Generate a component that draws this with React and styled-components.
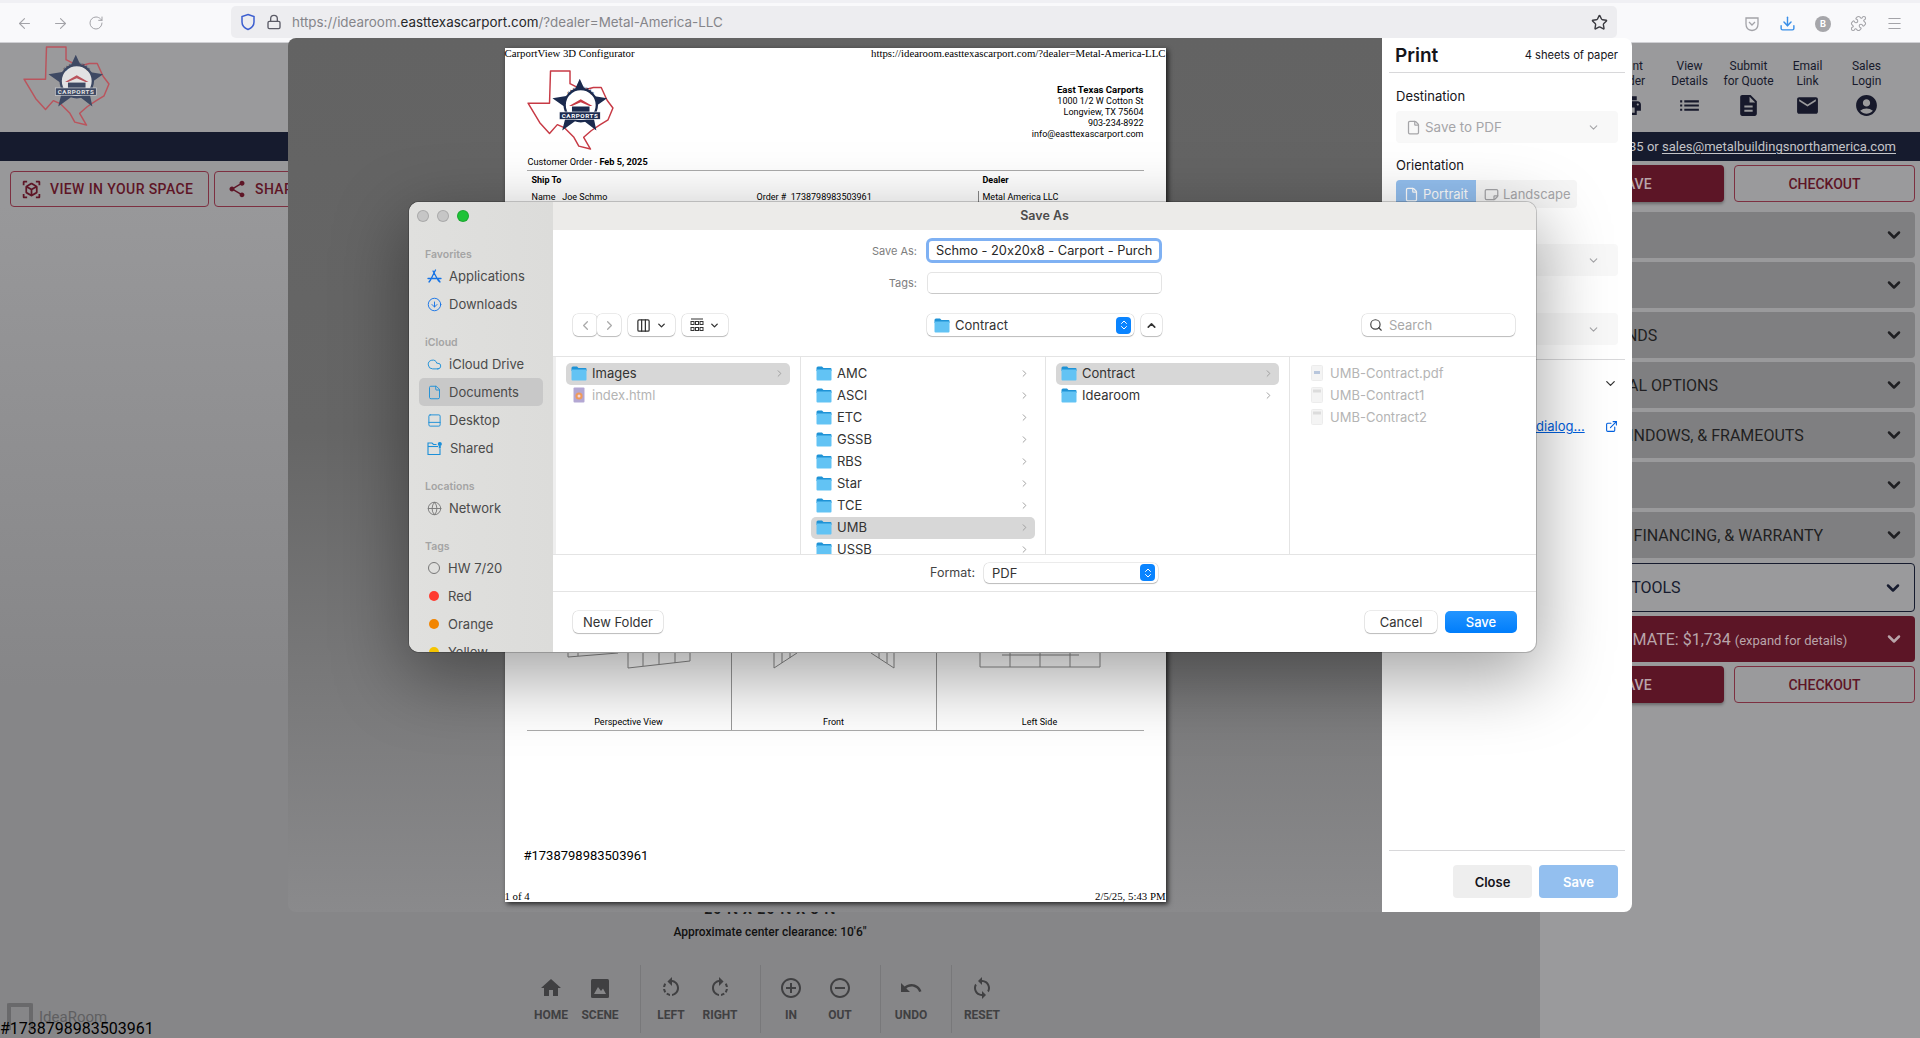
import React from "react";
import styled, { createGlobalStyle } from "styled-components";
import {
  ArrowLeft,
  ArrowRight,
  RotateCw,
  Lock,
  Star,
  Download,
  Puzzle,
  Menu,
  ChevronDown,
  ChevronUp,
  ChevronRight,
  ChevronLeft,
  ChevronsUpDown,
  File,
  ExternalLink,
  CircleArrowDown,
  Cloud,
  PanelBottom,
  Globe,
  Columns3,
  Search,
} from "lucide-react";
import {
  MdHome,
  MdRotateLeft,
  MdRotateRight,
  MdAddCircleOutline,
  MdRemoveCircleOutline,
  MdUndo,
  MdSync,
  MdList,
  MdDescription,
  MdMail,
  MdAccountCircle,
  MdPrint,
  MdShare,
  MdViewInAr,
} from "react-icons/md";

const GlobalStyle = createGlobalStyle`
  html, body { margin: 0; padding: 0; height: 100%; overflow: hidden; }
  body { font-family: Roboto, "Liberation Sans", sans-serif; background: #9a9a9c; }
  * { box-sizing: border-box; }
`;

const Screen = styled.div`
  position: relative;
  width: 1920px;
  height: 1038px;
  display: flex;
  flex-direction: column;
  overflow: hidden;
`;

/* browser chrome */
const BrowserBar = styled.div`
  height: 43px;
  flex: none;
  display: flex;
  align-items: center;
  padding: 2px 0 0 16px;
  background: #f9f9fb;
  border-top: 3px solid #f0f0f4;
  border-bottom: 1px solid #d0d0d4;
  color: #a3a3a8;
`;

const NavIcons = styled.div`
  display: flex;
  gap: 19px;
  width: 215px;
  flex: none;
`;

const UrlBar = styled.div`
  width: 1386px;
  height: 32px;
  margin-top: -3px;
  flex: none;
  display: flex;
  align-items: center;
  padding: 0 9px 0 9px;
  border-radius: 5px;
  background: #ededf0;
  font: 13.4px Inter, sans-serif;
  color: #85858a;
`;

const UrlText = styled.span`
  margin-left: 10px;
  flex: 1;
  b { font-weight: 400; color: #27272a; }
`;

const ToolIcons = styled.div`
  display: flex;
  align-items: center;
  gap: 19px;
  margin-left: 127px;
`;

const Avatar = styled.div`
  width: 16px;
  height: 16px;
  border-radius: 50%;
  background: #a6a6aa;
  color: #fff;
  font: 700 9px/16px Inter, sans-serif;
  text-align: center;
`;

/* configurator behind the dialogs */
const AppHeader = styled.header`
  height: 89px;
  flex: none;
  display: flex;
  justify-content: space-between;
  background: #9a9a9c;
  padding: 3px 24px 0 23px;
`;

const HeaderNav = styled.nav`
  display: flex;
`;

const NavItem = styled.div`
  width: 59px;
  padding-top: 13px;
  display: flex;
  flex-direction: column;
  align-items: center;
  font-size: 12px;
  line-height: 15px;
  text-align: center;
  color: #17192b;
  svg { margin-top: 4px; }
`;

const InfoBar = styled.div`
  height: 29px;
  flex: none;
  display: flex;
  align-items: center;
  justify-content: flex-end;
  padding-right: 24px;
  background: #161b2e;
  color: #c4c4c8;
  font-size: 13px;
  u { text-underline-offset: 2px; }
`;

const Main = styled.div`
  flex: 1;
  display: flex;
  min-height: 0;
`;

const Canvas = styled.main`
  position: relative;
  flex: 1;
  display: flex;
  flex-direction: column;
  background: linear-gradient(#98989a 5%, #868688 60%);
`;

const CanvasActions = styled.div`
  height: 46px;
  display: flex;
  gap: 5px;
  padding: 10px 0 0 10px;
`;

const OutlineAction = styled.div`
  height: 36px;
  width: ${(p) => p.$width}px;
  display: flex;
  align-items: center;
  gap: 8px;
  padding-left: ${(p) => p.$inset}px;
  border: 1px solid #7d3041;
  border-radius: 4px;
  color: #5e1526;
  font-size: 14px;
  font-weight: 500;
  letter-spacing: 0.4px;
`;

const Dimensions = styled.div`
  margin-top: auto;
  text-align: center;
  font-size: 14px;
  font-weight: 700;
  letter-spacing: 1px;
  color: #1a1a1a;
  line-height: 16px;
`;

const Clearance = styled.div`
  margin-top: 7px;
  text-align: center;
  font-size: 12px;
  font-weight: 500;
  line-height: 16px;
  color: #111;
`;

const ViewToolbar = styled.div`
  display: flex;
  justify-content: center;
  padding: 25px 0 5px;
  margin-left: 2px;
`;

const ToolGroup = styled.div`
  display: flex;
  padding: 0 15px 0 6px;
  height: 68px;
  border-right: ${(p) => (p.$last ? "none" : "1px solid #78787a")};
`;

const ToolItem = styled.div`
  width: 49px;
  display: flex;
  flex-direction: column;
  align-items: center;
  padding-top: 11px;
  color: #404042;
  font-size: 12px;
  font-weight: 700;
  gap: 7px;
  line-height: 16px;
`;

const ToolGlyph = styled.span`
  height: 24px;
  display: flex;
  align-items: center;
`;

const Watermark = styled.div`
  position: absolute;
  left: 7px;
  bottom: 8px;
  display: flex;
  align-items: center;
  gap: 6px;
  color: #5f5f61;
  font-size: 15px;
  i {
    width: 26px;
    height: 27px;
    border: 4px solid #69696b;
    border-bottom: none;
    border-radius: 2px;
  }
`;

const OrderStamp = styled.div`
  position: absolute;
  left: 0;
  bottom: 0;
  font-size: 16px;
  line-height: 19px;
  color: #000;
`;

const SidePanel = styled.aside`
  width: 380px;
  flex: none;
  background: #9a9a9c;
  padding: 4px 5px 0;
  display: flex;
  flex-direction: column;
  gap: 4px;
`;

const ActionRow = styled.div`
  display: flex;
  gap: 10px;
  height: 37px;
  flex: none;
  margin-bottom: ${(p) => p.$below || 0}px;
`;

const SolidAction = styled.div`
  flex: 1;
  display: flex;
  align-items: center;
  justify-content: center;
  border-radius: 4px;
  background: #5c1526;
  color: #b9a5aa;
  font-size: 14px;
  font-weight: 500;
  box-shadow: 0 2px 3px rgba(0, 0, 0, 0.3);
`;

const GhostAction = styled(SolidAction)`
  background: transparent;
  box-shadow: none;
  border: 1px solid #7d3041;
  color: #5e1526;
`;

const Accordion = styled.div`
  height: ${(p) => (p.$variant === "outlined" ? 49 : 46)}px;
  flex: none;
  display: flex;
  align-items: center;
  justify-content: space-between;
  padding: 0 11px 0 11px;
  border-radius: 4px;
  font-size: 16px;
  ${(p) =>
    p.$variant === "outlined"
      ? "border: 1px solid #161b2e; color: #161b2e; margin-top: 1px;"
      : p.$variant === "price"
      ? "background: #5c1526; color: #b9a5aa;"
      : "background: #7f7f81; color: #1f1f22;"}
  small { font-size: 13px; }
`;

/* firefox print preview */
const PrintDialog = styled.section`
  position: absolute;
  left: 288px;
  top: 38px;
  width: 1344px;
  height: 874px;
  display: flex;
  border-radius: 8px;
  overflow: hidden;
`;

const PreviewArea = styled.div`
  flex: 1;
  display: flex;
  justify-content: center;
  padding-top: 10px;
  background: linear-gradient(#636363, #666666 45%, #8a8a8c);
`;

const Sheet = styled.div`
  width: 661px;
  height: 854px;
  display: flex;
  flex-direction: column;
  background: #fff;
  color: #000;
  box-shadow: 2px 2px 5px rgba(0, 0, 0, 0.75);
`;

const SheetLine = styled.div`
  display: flex;
  justify-content: space-between;
  font: 10.8px/11px "Liberation Serif", serif;
  white-space: nowrap;
`;

const SheetBody = styled.div`
  flex: 1;
  display: flex;
  flex-direction: column;
  padding: 0 22px;
  font-size: 9px;
`;

const BrandRow = styled.div`
  display: flex;
  justify-content: space-between;
  margin-top: 11px;
  height: 82px;
`;

const CompanyBlock = styled.div`
  margin-top: 13px;
  text-align: right;
  line-height: 11px;
  b { font-size: 9.6px; line-height: 13px; }
`;

const OrderDate = styled.div`
  margin-top: 4px;
  padding: 0 0 2px 1px;
  font-size: 9.2px;
  line-height: 12px;
  border-bottom: 1px solid #aaa;
`;

const PartyHeads = styled.div`
  display: flex;
  padding: 3px 0 0 5px;
  font-weight: 700;
  line-height: 12px;
  span:first-child { width: 451px; }
`;

const PartyRow = styled.div`
  display: flex;
  padding: 5px 0 0 5px;
  line-height: 12px;
`;

const PartyCell = styled.span`
  width: ${(p) => p.$width}px;
  flex: none;
  ${(p) => p.$divided && "border-left: 1px solid #888; margin-left: -5px; padding-left: 4px;"}
`;

const ViewsRow = styled.div`
  margin-top: auto;
  display: grid;
  grid-template-columns: 205px 205px 206px;
  height: 78px;
  border-bottom: 1px solid #aaa;
`;

const ViewCell = styled.div`
  display: flex;
  flex-direction: column;
  justify-content: space-between;
  align-items: center;
  border-right: ${(p) => (p.$last ? "none" : "1px solid #999")};
  line-height: 12px;
  padding-bottom: 2px;
`;

const Barcode = styled.div`
  margin: 117px 0 27px -3px;
  font-size: 13px;
  line-height: 16px;
`;

/* print settings */
const PrintPanel = styled.div`
  width: 250px;
  flex: none;
  display: flex;
  flex-direction: column;
  background: #fff;
  color: #15141a;
  font-family: Inter, sans-serif;
`;

const PanelHead = styled.div`
  height: 35px;
  flex: none;
  margin: 0 7px;
  padding: 0 7px 0 6px;
  display: flex;
  align-items: center;
  justify-content: space-between;
  border-bottom: 1px solid #d8d8da;
  font-size: 11.2px;
  b { font-size: 19px; font-weight: 600; }
`;

const PanelBody = styled.div`
  flex: 1;
  padding: 15px 14px 0;
`;

const FieldLabel = styled.div`
  font-size: 13px;
  line-height: 16px;
  height: 16px;
`;

const FakeSelect = styled.div`
  height: 32px;
  margin: ${(p) => p.$margin || "7px 0 14px"};
  padding: 0 18px 0 10px;
  display: flex;
  align-items: center;
  gap: 4px;
  border-radius: 4px;
  background: #f8f8f8;
  color: #a5a5a8;
  font-size: 13.4px;
  svg:last-child { margin-left: auto; }
`;

const ToggleGroup = styled.div`
  width: 181px;
  height: 28px;
  margin-top: 7px;
  display: flex;
  border-radius: 4px;
  overflow: hidden;
  background: #f6f6f6;
  color: #a5a5a8;
  font-size: 13px;
`;

const ToggleButton = styled.div`
  flex: ${(p) => (p.$active ? "0 0 80px" : 1)};
  display: flex;
  align-items: center;
  gap: 4px;
  padding-left: 8px;
  background: ${(p) => (p.$active ? "#93bfef" : "transparent")};
  color: ${(p) => (p.$active ? "#fff" : "inherit")};
`;

const MoreRow = styled.div`
  margin: 14px -7px 0;
  padding: 16px 7px 0;
  height: 59px;
  border-top: 1px solid #d8d8da;
  display: flex;
  justify-content: flex-end;
`;

const SystemLink = styled.div`
  display: flex;
  justify-content: space-between;
  align-items: center;
  color: #0060df;
  font-size: 13px;
  span { text-decoration: underline; }
`;

const PanelFoot = styled.div`
  margin: 0 7px;
  padding: 14px 7px 14px 0;
  display: flex;
  justify-content: flex-end;
  gap: 7px;
  border-top: 1px solid #d8d8da;
`;

const PanelButton = styled.div`
  width: 79px;
  height: 33px;
  display: flex;
  align-items: center;
  justify-content: center;
  border-radius: 4px;
  font-size: 13px;
  font-weight: 600;
  background: ${(p) => (p.$primary ? "#93bfef" : "#eeeeee")};
  color: ${(p) => (p.$primary ? "#fff" : "#15141a")};
`;

/* macOS save sheet */
const SaveSheet = styled.section`
  position: absolute;
  left: 409px;
  top: 202px;
  width: 1127px;
  height: 450px;
  display: flex;
  border-radius: 10px;
  overflow: hidden;
  background: #fff;
  font-family: Inter, sans-serif;
  font-feature-settings: "calt" 0;
  box-shadow: 0 0 0 1px rgba(0, 0, 0, 0.18), 0 22px 70px 4px rgba(0, 0, 0, 0.36);
`;

const Sidebar = styled.nav`
  width: 144px;
  flex: none;
  padding: 45px 10px 0;
  background: linear-gradient(90deg, #e0e0de, #dcdcda);
  overflow: hidden;
`;

const SideLabel = styled.div`
  height: 14px;
  margin: ${(p) => (p.$first ? "1px" : "18px")} 0 0 6px;
  font-size: 10.5px;
  font-weight: 600;
  line-height: 14px;
  color: #a4a4a4;
`;

const SideRow = styled.div`
  height: 28px;
  display: flex;
  align-items: center;
  gap: 7px;
  padding-left: 8px;
  border-radius: 5px;
  background: ${(p) => (p.$active ? "#c8c8c8" : "transparent")};
  color: #4a4a4a;
  font-size: 13px;
  svg { color: ${(p) => p.$tint || "#1c8fd8"}; flex: none; }
`;

const TagDot = styled.span`
  width: 14px;
  height: 14px;
  flex: none;
  display: flex;
  align-items: center;
  justify-content: center;
  &::before {
    content: "";
    width: 10px;
    height: 10px;
    border-radius: 50%;
    ${(p) => (p.$color ? `background: ${p.$color};` : "border: 1px solid #777;")}
  }
`;

const Traffic = styled.div`
  position: absolute;
  left: 8px;
  top: 8px;
  display: flex;
  gap: 8px;
`;

const Light = styled.i`
  width: 12px;
  height: 12px;
  border-radius: 50%;
  background: ${(p) => p.$color};
  border: 1px solid rgba(0, 0, 0, 0.14);
`;

const SavePane = styled.div`
  flex: 1;
  display: flex;
  flex-direction: column;
  min-width: 0;
`;

const TitleBar = styled.div`
  height: 28px;
  flex: none;
  display: flex;
  align-items: center;
  justify-content: center;
  padding-bottom: 1px;
  background: #ecebe9;
  font-size: 12.5px;
  font-weight: 600;
  color: #4c4c4c;
`;

const FormRow = styled.div`
  display: flex;
  align-items: center;
  margin-top: ${(p) => p.$top}px;
`;

const FormLabel = styled.label`
  width: 364px;
  margin-right: 9px;
  text-align: right;
  font-size: 11px;
  color: #7d7d7d;
`;

const NameInput = styled.div`
  width: 236px;
  height: 25px;
  padding-left: 7px;
  display: flex;
  align-items: center;
  overflow: hidden;
  white-space: nowrap;
  border: 3px solid #7fb1f3;
  border-radius: 6px;
  font-size: 12.8px;
  color: #262626;
`;

const TagsInput = styled.div`
  width: 235px;
  height: 22px;
  margin-left: 1px;
  border: 1px solid #e4e4e4;
  border-bottom-color: #c9c9c9;
  border-radius: 5px;
`;

const BrowserTools = styled.div`
  height: 22px;
  flex: none;
  margin-top: 20px;
  padding: 0 21px 0 20px;
  display: flex;
  gap: 7px;
`;

const MacButton = styled.div`
  width: ${(p) => p.$width}px;
  height: ${(p) => p.$height || 22}px;
  flex: none;
  display: flex;
  align-items: center;
  justify-content: ${(p) => p.$justify || "center"};
  gap: 5px;
  margin-left: ${(p) => p.$left || 0}px;
  border-radius: 5px;
  background: #fff;
  box-shadow: 0 0 0 0.5px rgba(0, 0, 0, 0.16), 0 1px 1px rgba(0, 0, 0, 0.2);
  color: #333;
  font-size: 13px;
`;

const Stepper = styled.span`
  width: 15px;
  height: 17px;
  flex: none;
  display: flex;
  align-items: center;
  justify-content: center;
  border-radius: 4px;
  background: #0a84ff;
  color: #fff;
  margin-left: auto;
  margin-right: 3px;
`;

const SearchBox = styled(MacButton)`
  margin-left: auto;
  justify-content: flex-start;
  gap: 6px;
  padding-left: 7px;
  color: #a8a8a8;
  font-size: 13px;
  svg { color: #444; }
`;

const Columns = styled.div`
  flex: 1;
  min-height: 0;
  margin-top: 20px;
  display: flex;
  border-top: 1px solid #e4e4e4;
  border-bottom: 1px solid #e4e4e4;
`;

const Column = styled.div`
  width: ${(p) => p.$width}px;
  flex: ${(p) => (p.$width ? "none" : 1)};
  padding: 6px 10px 0 ${(p) => p.$inset || 10}px;
  overflow: hidden;
  border-right: ${(p) => (p.$last ? "none" : "1px solid #e4e4e4")};
  border-left: ${(p) => (p.$first ? "3px solid #efefef" : "none")};
`;

const FileRow = styled.div`
  height: 22px;
  flex: none;
  display: flex;
  align-items: center;
  gap: 5px;
  padding: 0 5px 2px;
  border-radius: 5px;
  background: ${(p) => (p.$selected ? "#d7d7d7" : "transparent")};
  color: ${(p) => (p.$dim ? "#b4b4b4" : "#333")};
  font-size: 13px;
  svg:not(:first-child) { margin-left: auto; color: #9a9a9a; }
`;

const FormatRow = styled.div`
  height: 36px;
  flex: none;
  display: flex;
  align-items: center;
  gap: 9px;
  padding: 0 0 1px 216px;
`;

const FormatLabel = styled.span`
  width: 206px;
  text-align: right;
  font-size: 12.5px;
  color: #444;
`;

const SaveFoot = styled.div`
  height: 61px;
  flex: none;
  display: flex;
  align-items: center;
  padding: 0 20px 1px;
  border-top: 1px solid #e4e4e4;
`;

const SaveButton = styled(MacButton)`
  background: linear-gradient(#2395ff, #007dfb);
  color: #fff;
  font-weight: 500;
  box-shadow: none;
`;

function Logo({ dim, id }) {
  return (
    <svg width="87" height="80" viewBox="0 0 89 82" opacity={dim ? 0.72 : 1}>
      <defs>
        <path id={id} d="M41 34 A14 14 0 0 1 69 34" />
      </defs>
      <path
        d="M24 1 L44 1 L44 14 L52 18 L60 20 L68 18 L76 18 L82 31 L88 39 L83 51 L75 56 L66 62 L58 69 L62 76 L65 81 L53 78 L48 69 L38 59 L31 56 L23 65 L13 54 L1 34 L23 34 Z"
        fill={dim ? "none" : "#fff"}
        stroke="#c73a45"
        strokeWidth="1.5"
        strokeLinejoin="round"
      />
      <path
        d="M54 9 L61.6 25.5 L82 29 L66.4 40 L71 62 L54 49 L36 62 L41.6 40 L26 29 L46.4 25.5 Z"
        fill="#1b2a4e"
      />
      <circle cx="55" cy="36" r="16.5" fill="#fff" stroke="#1b2a4e" strokeWidth="2.4" />
      <text fontSize="4.6" fontWeight="700" fill="#1b2a4e" fontFamily="Roboto, sans-serif">
        <textPath href={`#${id}`} startOffset="50%" textAnchor="middle">
          EAST TEXAS
        </textPath>
      </text>
      <path d="M43 37 L55 30 L67 37 L64 37 L55 33 L46 37 Z" fill="#c73a45" />
      <path d="M46 37.5 H64 V43 H46 Z" fill="#1b2a4e" />
      <rect x="33" y="43" width="42" height="7.5" fill="#1b2a4e" stroke="#fff" strokeWidth="0.6" />
      <text
        x="54"
        y="49"
        fontSize="6.4"
        fontWeight="700"
        fill="#fff"
        textAnchor="middle"
        textLength="37"
        fontFamily="Roboto, sans-serif"
      >
        CARPORTS
      </text>
    </svg>
  );
}

function FolderIcon({ size = 16 }) {
  return (
    <svg width={size} height={size - 1} viewBox="0 0 16 15">
      <path d="M0.5 2 Q0.5 0.5 2 0.5 H6 L7.5 2 H14.5 Q15.5 2 15.5 3 V5 H0.5 Z" fill="#1f93d6" />
      <rect x="0.5" y="3.5" width="15" height="11" rx="1" fill="#62c3f4" />
    </svg>
  );
}

function AppsIcon() {
  return (
    <svg width="15" height="15" viewBox="0 0 15 15" fill="none" stroke="#1573e6" strokeWidth="1.3" strokeLinecap="round">
      <path d="M8.5 1 L3.5 11 M6 2 L11.5 12 M1 9.5 H14 M2 13 L3.5 11 M13 13 L11.5 11" />
    </svg>
  );
}

function SharedIcon() {
  return (
    <svg width="16" height="15" viewBox="0 0 16 15" fill="none" stroke="currentColor" strokeWidth="1.1">
      <path d="M9.5 3.5 H6.5 L5 2 H1 V13.5 H13 V8" />
      <path d="M1 5.5 H11" />
      <circle cx="12.8" cy="3" r="1.5" fill="currentColor" />
      <path d="M12.8 5 V7.5" strokeWidth="2" />
    </svg>
  );
}

function GroupIcon() {
  return (
    <svg width="14" height="14" viewBox="0 0 14 14" fill="none" stroke="#333" strokeWidth="1">
      <path d="M1 1 H13" />
      <rect x="1" y="3.5" width="3" height="3" />
      <rect x="5.5" y="3.5" width="3" height="3" />
      <rect x="10" y="3.5" width="3" height="3" />
      <rect x="1" y="9.5" width="3" height="3" />
      <rect x="5.5" y="9.5" width="3" height="3" />
      <rect x="10" y="9.5" width="3" height="3" />
    </svg>
  );
}

function HtmlFileIcon() {
  return (
    <svg width="16" height="16" viewBox="0 0 16 16">
      <rect x="2.5" y="0.5" width="11" height="15" rx="1" fill="#b3a7d3" />
      <circle cx="8" cy="9" r="3.6" fill="#ef9a5a" />
      <circle cx="8" cy="9" r="1.5" fill="#f3d6e0" />
    </svg>
  );
}

function ThumbIcon({ kind }) {
  return (
    <svg width="16" height="16" viewBox="0 0 16 16">
      <rect x="2.5" y="0.5" width="11" height="15" rx="1" fill="#f4f4f4" stroke="#ececec" />
      {kind === "pdf" ? <rect x="5" y="6" width="6" height="3" fill="#b8c6dc" /> : <rect x="4" y="2.5" width="8" height="3" fill="#dcdcdc" />}
    </svg>
  );
}

function ScenePortrait() {
  return (
    <svg width="18" height="19" viewBox="0 0 18 19">
      <rect width="18" height="19" rx="1.5" fill="#404042" />
      <path d="M3 15 L7 8 L10 12 L12 9.5 L15 15 Z" fill="#868688" />
    </svg>
  );
}

const sidebarSections = [
  {
    title: "Favorites",
    items: [
      { label: "Applications", icon: <AppsIcon /> },
      { label: "Downloads", icon: <CircleArrowDown size={15} strokeWidth={1.5} color="#1573e6" /> },
    ],
  },
  {
    title: "iCloud",
    items: [
      { label: "iCloud Drive", icon: <Cloud size={15} strokeWidth={1.5} /> },
      { label: "Documents", icon: <File size={15} strokeWidth={1.5} />, active: true },
      { label: "Desktop", icon: <PanelBottom size={15} strokeWidth={1.5} /> },
      { label: "Shared", icon: <SharedIcon /> },
    ],
  },
  {
    title: "Locations",
    items: [{ label: "Network", icon: <Globe size={15} strokeWidth={1.5} />, tint: "#7a7a7a" }],
  },
];

const tags = [
  { label: "HW 7/20" },
  { label: "Red", color: "#ff3b30" },
  { label: "Orange", color: "#f28500" },
  { label: "Yellow", color: "#f5c400" },
];

const dealerFolders = ["AMC", "ASCI", "ETC", "GSSB", "RBS", "Star", "TCE", "UMB", "USSB"];
const contractFiles = [
  ["UMB-Contract.pdf", "pdf"],
  ["UMB-Contract1", "doc"],
  ["UMB-Contract2", "doc"],
];
const navItems = [
  ["Print", "Order", MdPrint],
  ["View", "Details", MdList],
  ["Submit", "for Quote", MdDescription],
  ["Email", "Link", MdMail],
  ["Sales", "Login", MdAccountCircle],
];
const sections = [
  "STYLE",
  "SIZE",
  "SIDES & ENDS",
  "ADDITIONAL OPTIONS",
  "DOORS, WINDOWS, & FRAMEOUTS",
  "COLORS",
  "PAYMENT, FINANCING, & WARRANTY",
];

const toolGroups = [
  [["HOME", <MdHome size={24} key="h" />], ["SCENE", <ScenePortrait key="s" />]],
  [["LEFT", <MdRotateLeft size={24} key="l" />], ["RIGHT", <MdRotateRight size={24} key="r" />]],
  [["IN", <MdAddCircleOutline size={24} key="i" />], ["OUT", <MdRemoveCircleOutline size={24} key="o" />]],
  [["UNDO", <MdUndo size={24} key="u" />]],
  [["RESET", <MdSync size={24} key="c" />]],
];

function Wireframes({ kind }) {
  const line = { fill: "none", stroke: "#8a8a8a", strokeWidth: 1 };
  if (kind === "perspective") {
    return (
      <svg width="205" height="16" viewBox="0 0 205 16">
        <path d="M42 0 V4 L92 0 M52 0 V3 M102 0 V15 L164 8 V0 M117 0 V13 M133 0 V11 M149 0 V10" {...line} />
      </svg>
    );
  }
  if (kind === "front") {
    return (
      <svg width="205" height="16" viewBox="0 0 205 16">
        <path d="M43 0 V15 L66 0 M51 0 V10 M59 0 V5 M140 0 L163 15 V0 M148 0 V5 M156 0 V10" {...line} />
      </svg>
    );
  }
  return (
    <svg width="205" height="16" viewBox="0 0 205 16">
      <path d="M43 0 V14 H163 V0 M73 0 V14 M103 0 V14 M133 0 V14 M65 2 H142" {...line} />
    </svg>
  );
}

const Chevron = () => <ChevronDown size={20} strokeWidth={3} />;

export default function App() {
  return (
    <Screen>
      <GlobalStyle />
      <BrowserBar>
        <NavIcons>
          <ArrowLeft size={17} strokeWidth={1.5} />
          <ArrowRight size={17} strokeWidth={1.5} />
          <RotateCw size={16} strokeWidth={1.5} />
        </NavIcons>
        <UrlBar>
          <svg width="16" height="18" viewBox="0 0 16 18" fill="none" stroke="#3d5fd0" strokeWidth="1.5">
            <path d="M8 1.5 L14 3.5 V9 Q14 14 8 16.5 Q2 14 2 9 V3.5 Z" />
          </svg>
          <Lock size={16} style={{ marginLeft: 10, color: "#5b5b66" }} />
          <UrlText>
            https://idearoom.<b>easttexascarport.com</b>/?dealer=Metal-America-LLC
          </UrlText>
          <Star size={17} color="#3a3a40" />
        </UrlBar>
        <ToolIcons>
          <svg width="16" height="16" viewBox="0 0 16 16" fill="none" stroke="#a3a3a8" strokeWidth="1.3">
            <path d="M2 2 H14 V8 Q14 14 8 14.5 Q2 14 2 8 Z M5 6 L8 9 L11 6" />
          </svg>
          <Download size={17} color="#3a8fe8" />
          <Avatar>B</Avatar>
          <Puzzle size={17} strokeWidth={1.5} />
          <Menu size={17} strokeWidth={1.5} />
        </ToolIcons>
      </BrowserBar>

      <AppHeader>
        <Logo dim id="logo-arc-app" />
        <HeaderNav>
          {navItems.map(([first, second, Icon]) => (
            <NavItem key={first}>
              {first}
              <br />
              {second}
              <Icon size={25} />
            </NavItem>
          ))}
        </HeaderNav>
      </AppHeader>
      <InfoBar>
        <span>
          Call 903-234-8935 or <u>sales@metalbuildingsnorthamerica.com</u>
        </span>
      </InfoBar>

      <Main>
        <Canvas>
          <CanvasActions>
            <OutlineAction $width={199} $inset={10}>
              <MdViewInAr size={21} />
              VIEW IN YOUR SPACE
            </OutlineAction>
            <OutlineAction $width={110} $inset={12}>
              <MdShare size={20} />
              SHARE
            </OutlineAction>
          </CanvasActions>
          <Dimensions>20 ft X 20 ft X 8 ft</Dimensions>
          <Clearance>Approximate center clearance: 10'6"</Clearance>
          <ViewToolbar>
            {toolGroups.map((group, i) => (
              <ToolGroup key={i} $last={i === toolGroups.length - 1}>
                {group.map(([label, icon]) => (
                  <ToolItem key={label}>
                    <ToolGlyph>{icon}</ToolGlyph>
                    {label}
                  </ToolItem>
                ))}
              </ToolGroup>
            ))}
          </ViewToolbar>
          <Watermark>
            <i />
            IdeaRoom
          </Watermark>
          <OrderStamp>#1738798983503961</OrderStamp>
        </Canvas>

        <SidePanel>
          <ActionRow $below={6}>
            <SolidAction>SAVE</SolidAction>
            <GhostAction>CHECKOUT</GhostAction>
          </ActionRow>
          {sections.map((label) => (
            <Accordion key={label}>
              {label}
              <Chevron />
            </Accordion>
          ))}
          <Accordion $variant="outlined">
            BUILDING TOOLS
            <Chevron />
          </Accordion>
          <Accordion $variant="price">
            <span>
              COST ESTIMATE: $1,734 <small>(expand for details)</small>
            </span>
            <Chevron />
          </Accordion>
          <ActionRow>
            <SolidAction>SAVE</SolidAction>
            <GhostAction>CHECKOUT</GhostAction>
          </ActionRow>
        </SidePanel>
      </Main>

      <PrintDialog>
        <PreviewArea>
          <Sheet>
            <SheetLine>
              <span>CarportView 3D Configurator</span>
              <span>https://idearoom.easttexascarport.com/?dealer=Metal-America-LLC</span>
            </SheetLine>
            <SheetBody>
              <BrandRow>
                <Logo id="logo-arc-sheet" />
                <CompanyBlock>
                  <b>East Texas Carports</b>
                  <br />
                  1000 1/2 W Cotton St
                  <br />
                  Longview, TX 75604
                  <br />
                  903-234-8922
                  <br />
                  info@easttexascarport.com
                </CompanyBlock>
              </BrandRow>
              <OrderDate>
                Customer Order - <b>Feb 5, 2025</b>
              </OrderDate>
              <PartyHeads>
                <span>Ship To</span>
                <span>Dealer</span>
              </PartyHeads>
              <PartyRow>
                <PartyCell $width={225}>Name &nbsp; Joe Schmo</PartyCell>
                <PartyCell $width={226}>Order # &nbsp;1738798983503961</PartyCell>
                <PartyCell $width={120} $divided>Metal America LLC</PartyCell>
              </PartyRow>
              <ViewsRow>
                <ViewCell>
                  <Wireframes kind="perspective" />
                  Perspective View
                </ViewCell>
                <ViewCell>
                  <Wireframes kind="front" />
                  Front
                </ViewCell>
                <ViewCell $last>
                  <Wireframes kind="left" />
                  Left Side
                </ViewCell>
              </ViewsRow>
              <Barcode>#1738798983503961</Barcode>
            </SheetBody>
            <SheetLine>
              <span>1 of 4</span>
              <span>2/5/25, 5:43 PM</span>
            </SheetLine>
          </Sheet>
        </PreviewArea>
        <PrintPanel>
          <PanelHead>
            <b>Print</b>
            4 sheets of paper
          </PanelHead>
          <PanelBody>
            <FieldLabel>Destination</FieldLabel>
            <FakeSelect>
              <File size={15} />
              Save to PDF
              <ChevronDown size={13} />
            </FakeSelect>
            <FieldLabel>Orientation</FieldLabel>
            <ToggleGroup>
              <ToggleButton $active>
                <File size={15} />
                Portrait
              </ToggleButton>
              <ToggleButton>
                <File size={15} style={{ transform: "rotate(90deg)" }} />
                Landscape
              </ToggleButton>
            </ToggleGroup>
            <FakeSelect $margin="36px 0 0">
              All
              <ChevronDown size={13} />
            </FakeSelect>
            <FakeSelect $margin="37px 0 0">
              Default
              <ChevronDown size={13} />
            </FakeSelect>
            <MoreRow>
              <ChevronDown size={15} color="#333" />
            </MoreRow>
            <SystemLink>
              <span>Print using the system dialog...</span>
              <ExternalLink size={13} />
            </SystemLink>
          </PanelBody>
          <PanelFoot>
            <PanelButton>Close</PanelButton>
            <PanelButton $primary>Save</PanelButton>
          </PanelFoot>
        </PrintPanel>
      </PrintDialog>

      <SaveSheet>
        <Sidebar>
          {sidebarSections.map((section, i) => (
            <React.Fragment key={section.title}>
              <SideLabel $first={i === 0}>{section.title}</SideLabel>
              {section.items.map((item) => (
                <SideRow key={item.label} $active={item.active} $tint={item.tint}>
                  {item.icon}
                  {item.label}
                </SideRow>
              ))}
            </React.Fragment>
          ))}
          <SideLabel>Tags</SideLabel>
          {tags.map((tag) => (
            <SideRow key={tag.label}>
              <TagDot $color={tag.color} />
              {tag.label}
            </SideRow>
          ))}
        </Sidebar>
        <Traffic>
          <Light $color="#c6c6c6" />
          <Light $color="#c6c6c6" />
          <Light $color="#1ec337" />
        </Traffic>
        <SavePane>
          <TitleBar>Save As</TitleBar>
          <FormRow $top={8}>
            <FormLabel>Save As:</FormLabel>
            <NameInput>Schmo - 20x20x8 - Carport - Purch</NameInput>
          </FormRow>
          <FormRow $top={9}>
            <FormLabel>Tags:</FormLabel>
            <TagsInput />
          </FormRow>
          <BrowserTools>
            <MacButton $width={24}>
              <ChevronLeft size={15} color="#aaa" />
            </MacButton>
            <MacButton $width={24} style={{ marginLeft: -7 }}>
              <ChevronRight size={15} color="#aaa" />
            </MacButton>
            <MacButton $width={47}>
              <Columns3 size={15} />
              <ChevronDown size={11} strokeWidth={3} />
            </MacButton>
            <MacButton $width={46}>
              <GroupIcon />
              <ChevronDown size={11} strokeWidth={3} />
            </MacButton>
            <MacButton $width={207} $left={192} $justify="flex-start" style={{ paddingLeft: 7 }}>
              <FolderIcon />
              Contract
              <Stepper>
                <ChevronsUpDown size={12} />
              </Stepper>
            </MacButton>
            <MacButton $width={21}>
              <ChevronUp size={13} strokeWidth={3} />
            </MacButton>
            <SearchBox $width={153}>
              <Search size={14} />
              Search
            </SearchBox>
          </BrowserTools>
          <Columns>
            <Column $width={248} $first>
              <FileRow $selected>
                <FolderIcon />
                Images
                <ChevronRight size={11} />
              </FileRow>
              <FileRow $dim>
                <HtmlFileIcon />
                index.html
              </FileRow>
            </Column>
            <Column $width={245}>
              {dealerFolders.map((name) => (
                <FileRow key={name} $selected={name === "UMB"}>
                  <FolderIcon />
                  {name}
                  <ChevronRight size={11} />
                </FileRow>
              ))}
            </Column>
            <Column $width={244}>
              <FileRow $selected>
                <FolderIcon />
                Contract
                <ChevronRight size={11} />
              </FileRow>
              <FileRow>
                <FolderIcon />
                Idearoom
                <ChevronRight size={11} />
              </FileRow>
            </Column>
            <Column $last $inset={14}>
              {contractFiles.map(([name, kind]) => (
                <FileRow key={name} $dim>
                  <ThumbIcon kind={kind} />
                  {name}
                </FileRow>
              ))}
            </Column>
          </Columns>
          <FormatRow>
            <FormatLabel>Format:</FormatLabel>
            <MacButton $width={174} $height={20} $justify="flex-start" style={{ paddingLeft: 8 }}>
              PDF
              <Stepper>
                <ChevronsUpDown size={12} />
              </Stepper>
            </MacButton>
          </FormatRow>
          <SaveFoot>
            <MacButton $width={90}>New Folder</MacButton>
            <MacButton $width={72} $left={702}>
              Cancel
            </MacButton>
            <SaveButton $width={72} $left={8}>
              Save
            </SaveButton>
          </SaveFoot>
        </SavePane>
      </SaveSheet>
    </Screen>
  );
}
